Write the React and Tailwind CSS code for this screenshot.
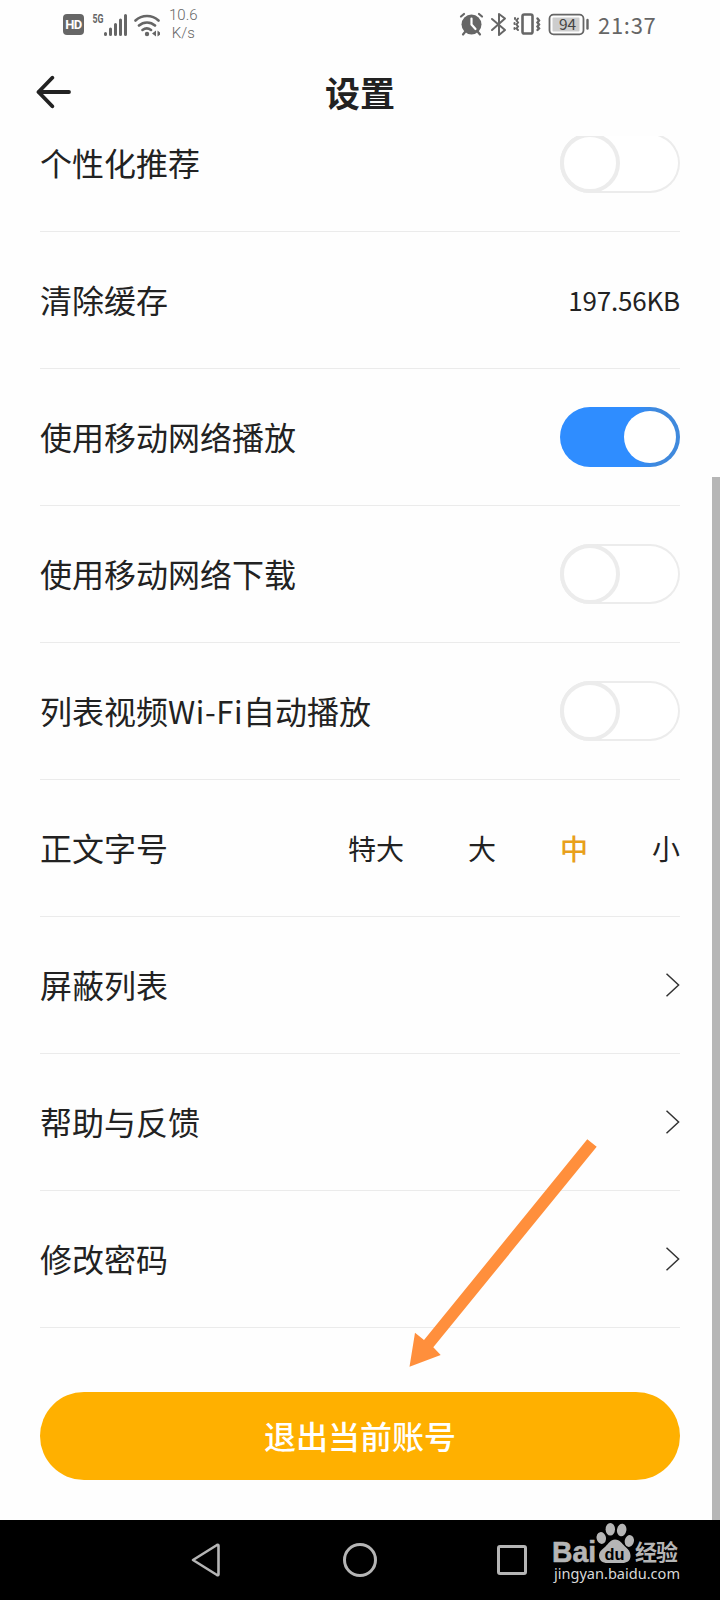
import React, { useState } from 'react';

const FONT_SIZES = ['特大', '大', '中', '小'];

function StatusBar() {
  return (
    <div className="flex h-12 shrink-0 items-center justify-between pl-[63px] pr-[64px] text-[#666]">
      <div className="flex items-center">
        <span className="mt-px flex h-[21px] w-[21px] items-center justify-center rounded-[4px] bg-[#666] font-['Roboto',sans-serif] text-[13px] font-bold tracking-[-0.6px] text-white">
          HD
        </span>
        <svg className="ml-2 mt-px" width="68" height="26" viewBox="92 11 68 26" fill="none" stroke="currentColor">
          <text x="92.5" y="22" fill="currentColor" stroke="none" fontFamily="Roboto, sans-serif" fontSize="13" fontWeight="700" textLength="11" lengthAdjust="spacingAndGlyphs">5G</text>
          <path d="M105.5 32.5v1M110.5 28v5.5M115.5 23.5v10M120.5 19v14.5M125.5 14.5v19" strokeWidth="3" strokeLinecap="round" />
          <path d="M135.5 19.5a17 17 0 0 1 23 0M139 24.5a12 12 0 0 1 16 0M142.5 29a7 7 0 0 1 8.5 0" strokeWidth="2.6" strokeLinecap="round" />
          <circle cx="147" cy="33" r="2.2" fill="currentColor" stroke="none" />
          <path d="M152 32.5l4-3v6zM161.5 32.5l-4-3v6z" fill="currentColor" stroke="none" />
        </svg>
        <div className="ml-[9px] text-center font-['Roboto',sans-serif] text-[15px] font-light leading-[18px]">
          <div>10.6</div>
          <div>K/s</div>
        </div>
      </div>

      <div className="flex items-center">
        <svg width="130" height="26" viewBox="459 11 130 26" fill="none" stroke="currentColor" strokeLinecap="round">
          <circle cx="471.5" cy="24.5" r="10" fill="currentColor" stroke="none" />
          <path d="M471.5 18.5v6l4 4.5" stroke="#fff" strokeWidth="2.2" />
          <path d="M461 16.5l3-2.5M482 16.5l-3-2.5M465 32l-2 2.5M478 32l2 2.5" strokeWidth="2.2" />
          <path d="M492 19l13 11-6 5V14l6 4.5L492 30" strokeWidth="2" strokeLinejoin="round" />
          <rect x="522.5" y="14.5" width="10" height="19" rx="1.8" strokeWidth="2.6" />
          <path d="M518 18.5l-1.5 2 1.5 2-1.5 2 1.5 2-1.5 2 1.5 1.5M515 18v1M514.5 23v1M514.5 28v1" strokeWidth="2" />
          <path d="M537.5 18.5l1.5 2-1.5 2 1.5 2-1.5 2 1.5 2-1.5 1.5" strokeWidth="2.4" />
          <rect x="549.5" y="14.7" width="34" height="19.6" rx="4" strokeWidth="1.8" />
          <rect x="552.5" y="17.5" width="27" height="14" rx="1" fill="#cdcdcd" stroke="none" />
          <text x="559" y="30" fill="#444" stroke="none" fontFamily="'Noto Sans CJK SC', sans-serif" fontSize="15.5" textLength="17">94</text>
          <path d="M587.5 20v8.5" strokeWidth="2.4" />
        </svg>
        <span className="ml-[9px] w-[58px] whitespace-nowrap pb-px font-['Noto_Sans_CJK_SC',sans-serif] text-[22px] leading-none tracking-[0.7px]">
          21:37
        </span>
      </div>
    </div>
  );
}

function Toggle({ on, onClick }) {
  return (
    <button
      onClick={onClick}
      className={
        on
          ? 'flex h-[60px] w-[120px] justify-end rounded-full bg-[linear-gradient(90deg,#2f8dff_62%,#3f89dd_80%)] p-1'
          : 'flex h-[60px] w-[120px] rounded-full bg-white shadow-[inset_0_0_0_2px_#ececec]'
      }
    >
      <span
        className={
          on
            ? 'h-[52px] w-[52px] rounded-full bg-white'
            : 'h-[60px] w-[60px] rounded-full border-4 border-[#ececec] bg-white'
        }
      />
    </button>
  );
}

function Chevron() {
  return (
    <svg width="14" height="24" viewBox="0 0 14 24" fill="none" stroke="#333" strokeWidth="1.5">
      <path d="M0.5 0.7L12.6 12 0.5 23.3" />
    </svg>
  );
}

function Row({ label, children }) {
  return (
    <div className="flex h-[137px] items-center justify-between border-b border-[#ebebeb]">
      <span className="whitespace-nowrap pb-[3px] text-[32px] leading-none">{label}</span>
      {children}
    </div>
  );
}

function Watermark() {
  return (
    <svg className="absolute bottom-0 right-[30px]" width="140" height="80" viewBox="550 1520 140 80" fill="#b5b5b5">
      <text x="552" y="1562" fontFamily="'Liberation Sans', sans-serif" fontSize="30" fontWeight="700" stroke="#b5b5b5" strokeWidth="0.6" textLength="44" lengthAdjust="spacingAndGlyphs">Bai</text>
      <ellipse cx="601.3" cy="1538" rx="4.7" ry="6" transform="rotate(-12 601.3 1538)" />
      <ellipse cx="610.3" cy="1529.3" rx="4.7" ry="6.3" />
      <ellipse cx="621.7" cy="1530" rx="4.7" ry="6.3" transform="rotate(10 621.7 1530)" />
      <ellipse cx="629.3" cy="1541" rx="4.6" ry="6" transform="rotate(12 629.3 1541)" />
      <path d="M615 1539.5c5 0 7 4 10 7 3 2.5 5.5 5 5.5 9.5 0 5-4 7-8 7h-15c-5 0-8.500-2.500-8.500-7.500 0-4 3.500-6.500 6.500-9 3-3 5-7 9.500-7z" />
      <text x="604.5" y="1559.5" fill="#000" fontFamily="'Liberation Sans', sans-serif" fontSize="17" fontWeight="700" textLength="20" lengthAdjust="spacingAndGlyphs">du</text>
      <text x="635" y="1560" fontFamily="'Noto Sans CJK SC', sans-serif" fontSize="22" fontWeight="700" textLength="43">经验</text>
      <text x="554" y="1579" fill="#d8d8d8" fontFamily="'Noto Sans', sans-serif" fontSize="15" textLength="126" lengthAdjust="spacingAndGlyphs">jingyan.baidu.com</text>
    </svg>
  );
}

export default function App() {
  const [toggles, setToggles] = useState({
    recommend: false,
    mobilePlay: true,
    mobileDownload: false,
    wifiAutoPlay: false,
  });
  const [fontSize, setFontSize] = useState('中');

  const flip = (key) => setToggles({ ...toggles, [key]: !toggles[key] });

  return (
    <div className="relative flex h-[1600px] w-[720px] flex-col overflow-hidden bg-[#fefefe] font-['Noto_Sans_CJK_SC',sans-serif] text-[#222]">
      <StatusBar />

      <header className="grid h-[88px] shrink-0 grid-cols-3 items-center px-9">
        <button aria-label="返回">
          <svg width="36" height="34" viewBox="36 75 36 34" fill="none" stroke="#222" strokeWidth="3.8" strokeLinecap="round" strokeLinejoin="round">
            <path d="M52.3 77.7L38.5 92l13.8 14.3M38.5 92H69" />
          </svg>
        </button>
        <h1 className="pb-0.5 text-center text-[35px] font-bold leading-none">设置</h1>
      </header>

      <main className="flex-1 overflow-hidden px-10">
        <div className="-mt-[41px]">
          <Row label="个性化推荐">
            <Toggle on={toggles.recommend} onClick={() => flip('recommend')} />
          </Row>
          <Row label="清除缓存">
            <span className="text-[26px] leading-none tracking-[-0.2px]">197.56KB</span>
          </Row>
          <Row label="使用移动网络播放">
            <Toggle on={toggles.mobilePlay} onClick={() => flip('mobilePlay')} />
          </Row>
          <Row label="使用移动网络下载">
            <Toggle on={toggles.mobileDownload} onClick={() => flip('mobileDownload')} />
          </Row>
          <Row
            label={
              <>
                列表视频
                <span className="inline-block w-[75px] text-[31px] tracking-[0.6px]">Wi-Fi</span>
                自动播放
              </>
            }
          >
            <Toggle on={toggles.wifiAutoPlay} onClick={() => flip('wifiAutoPlay')} />
          </Row>
          <Row label="正文字号">
            <div className="flex gap-16 text-[28px] leading-none">
              {FONT_SIZES.map((size) => (
                <button
                  key={size}
                  onClick={() => setFontSize(size)}
                  className={size === fontSize ? 'font-medium text-[#e8a01c]' : 'text-[#222]'}
                >
                  {size}
                </button>
              ))}
            </div>
          </Row>
          <Row label="屏蔽列表">
            <Chevron />
          </Row>
          <Row label="帮助与反馈">
            <Chevron />
          </Row>
          <Row label="修改密码">
            <Chevron />
          </Row>
        </div>

        <button className="mt-16 h-[88px] w-full rounded-full bg-[#ffb000] pb-[3px] text-[32px] font-medium leading-none text-white">
          退出当前账号
        </button>
      </main>

      <nav className="flex h-20 shrink-0 items-center bg-black pl-[190px]">
        <svg width="32" height="36" viewBox="190 1542 32 36" fill="none" stroke="#b5b5b5" strokeWidth="2.6" strokeLinejoin="round">
          <path d="M193 1560L217 1545q1.5-.8 1.5.8v28.4q0 1.6-1.5.8z" />
        </svg>
        <span className="ml-[121px] h-[34px] w-[34px] rounded-full border-[3px] border-[#b5b5b5]" />
        <span className="ml-[120px] h-[30px] w-[30px] rounded-[3px] border-[3px] border-[#b5b5b5]" />
      </nav>

      {/* scroll indicator */}
      <div className="absolute bottom-20 right-0 top-[477px] w-2 bg-[#b6b6b6]" />

      {/* pointer to the logout button */}
      <svg className="absolute left-[405px] top-[1135px]" width="196" height="236" viewBox="405 1135 196 236" fill="#ff8f3c">
        <path d="M409.5 1366.7L415 1332.7 424 1340 587.3 1139.3 596.7 1146.7 433.3 1347.3 440.7 1355z" />
      </svg>

      <Watermark />
    </div>
  );
}
